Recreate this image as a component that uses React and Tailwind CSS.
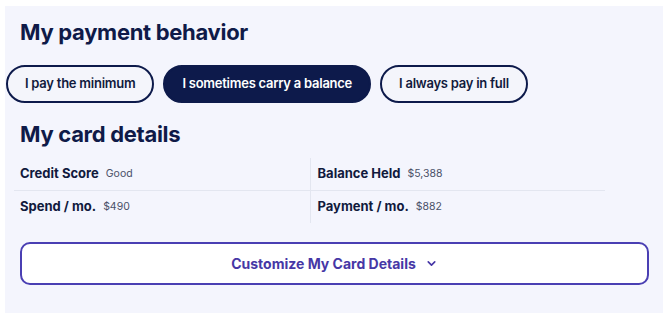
import React from "react";

const font = { fontFamily: "Inter, 'Noto Sans', sans-serif" };

function Pill({ children, active }) {
  return (
    <button
      className={
        "h-[38px] rounded-[19px] border-2 border-[#0d1a4b] px-[17px] text-[13px] font-semibold tracking-[-0.25px] " +
        (active ? "bg-[#0d1a4b] text-white" : "bg-[#f4f5fb] text-[#111a3d]")
      }
    >
      {children}
    </button>
  );
}

function Cell({ label, value, right }) {
  return (
    <div
      className={
        "flex h-[32px] items-center gap-[7px] " +
        (right ? "pl-[7px] border-l border-[#e3e6f0] " : "pl-[6px] ")
      }
    >
      <span className="text-[13px] font-bold text-[#111a3d]">{label}</span>
      <span className="text-[10.5px] text-[#4a5068]">{value}</span>
    </div>
  );
}

export default function App() {
  return (
    <div className="h-[320px] w-[670px] bg-white pt-[6px] pl-[5px]" style={font}>
      <div className="h-[307px] w-[658px] bg-[#f4f5fd] pl-[15px] pt-[12px]">
        <h1 className="text-[22px] leading-[28px] font-bold tracking-[-0.3px] text-[#0f1a48]">
          My payment behavior
        </h1>
        <div className="-ml-[14px] mt-[19px] flex gap-[9px]">
          <Pill>I pay the minimum</Pill>
          <Pill active>I sometimes carry a balance</Pill>
          <Pill>I always pay in full</Pill>
        </div>
        <h2 className="mt-[17px] text-[22px] leading-[28px] font-bold tracking-[-0.3px] text-[#0f1a48]">
          My card details
        </h2>
        <div className="-ml-[6px] mt-[10px] grid w-[591px] grid-cols-2">
          <div className="border-b border-[#e3e6f0]">
            <Cell label="Credit Score" value="Good" />
          </div>
          <div className="border-b border-[#e3e6f0]">
            <Cell label="Balance Held" value="$5,388" right />
          </div>
          <Cell label="Spend / mo." value="$490" />
          <Cell label="Payment / mo." value="$882" right />
        </div>
        <button className="mt-[19px] flex h-[43px] w-[629px] items-center justify-center gap-[9px] rounded-[10px] border-2 border-[#4a3fb3] bg-white text-[14px] font-bold text-[#4637a6]">
          Customize My Card Details
          <svg width="13" height="13" viewBox="0 0 24 24" fill="none" stroke="currentColor" strokeWidth="3" strokeLinecap="round" strokeLinejoin="round">
            <path d="M6 9l6 6 6-6" />
          </svg>
        </button>
      </div>
    </div>
  );
}
